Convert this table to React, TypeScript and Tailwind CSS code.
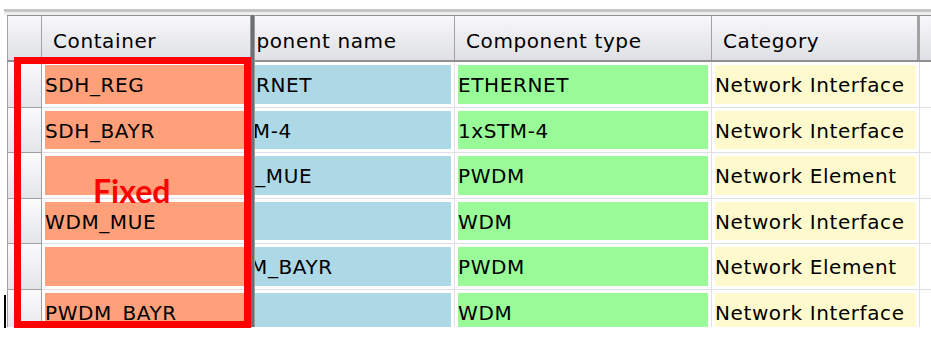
import React from 'react';

type Row = {
  container: string;
  name: string;
  type: string;
  category: string;
};

const rows: Row[] = [
  { container: 'SDH_REG', name: 'ETHERNET', type: 'ETHERNET', category: 'Network Interface' },
  { container: 'SDH_BAYR', name: '1xSTM-4', type: '1xSTM-4', category: 'Network Interface' },
  { container: '', name: 'WDM_MUE', type: 'PWDM', category: 'Network Element' },
  { container: 'WDM_MUE', name: '', type: 'WDM', category: 'Network Interface' },
  { container: '', name: 'PWDM_BAYR', type: 'PWDM', category: 'Network Element' },
  { container: 'PWDM_BAYR', name: '', type: 'WDM', category: 'Network Interface' },
];

const headCell = 'flex items-center pl-[11px] pt-[5px] bg-gradient-to-b from-[#f8f8fa] to-[#dfe0e5] border-r border-[#a3a3a3]';
const bodyCell = 'h-[45.5px] shrink-0 border-b border-r border-[#dde0e6] px-[3px] py-[3px]';
const fill = 'flex h-full items-center pt-[2px] whitespace-nowrap overflow-hidden';

const App: React.FC = () => {
  return (
    <div className="relative h-[340px] w-[931px] overflow-hidden bg-white font-['DejaVu_Sans',sans-serif] text-[20px] tracking-[0.6px] text-black">
      <div className="h-[9px]" />
      <div className="ml-[4px] h-[3px] bg-[#c6c6c6]" />
      <div className="ml-[4px] h-[3px] bg-[#efefef]" />

      <div className="ml-[7px] flex h-[312px] overflow-hidden">
        {/* frozen columns */}
        <div className="flex w-[243px] shrink-0 flex-col">
          <div className="flex h-[47px] shrink-0 border-t border-b-2 border-[#8f8f8f]">
            <div className="w-[35px] shrink-0 border-l border-r border-[#a3a3a3] bg-gradient-to-b from-[#f8f8fa] to-[#dfe0e5]" />
            <div className="flex w-[208px] items-center bg-gradient-to-b from-[#f8f8fa] to-[#dfe0e5] pl-[11px] pt-[5px]">Container</div>
          </div>
          {rows.map((r, i) => (
            <div key={i} className="flex">
              <div className="h-[45.5px] w-[35px] shrink-0 border-b border-l border-r border-[#a0a0a0] bg-gradient-to-b from-[#fbfbfc] to-[#e4e5e9]" />
              <div className="h-[45.5px] w-[208px] shrink-0 border-b border-[#dde0e6] py-[3px] pl-[3px] pr-[1px]">
                <div className={`${fill} bg-[#ffa07a]`}>{r.container}</div>
              </div>
            </div>
          ))}
        </div>

        {/* frozen separator */}
        <div className="w-[5px] shrink-0 border-x border-[#9a9ca0] bg-[#6c6f74]" />

        {/* scrolled columns */}
        <div className="flex-1 overflow-hidden">
          <div className="ml-[-57px] flex flex-col">
            <div className="flex h-[47px] shrink-0 border-t border-b-2 border-[#8f8f8f]">
              <div className={`${headCell} w-[257px] shrink-0`}>Component name</div>
              <div className={`${headCell} w-[257px] shrink-0`}>Component type</div>
              <div className={`${headCell} w-[208px] shrink-0 border-r-[3px] border-[#7f7f7f]`}>Category</div>
              <div className="w-[60px] shrink-0 bg-gradient-to-b from-[#f8f8fa] to-[#dfe0e5]" />
            </div>
            {rows.map((r, i) => (
              <div key={i} className="flex">
                <div className={`${bodyCell} w-[257px]`}>
                  <div className={`${fill} bg-[#add8e6]`}>{r.name}</div>
                </div>
                <div className={`${bodyCell} w-[257px]`}>
                  <div className={`${fill} bg-[#98fb98]`}>{r.type}</div>
                </div>
                <div className={`${bodyCell} w-[208px]`}>
                  <div className={`${fill} bg-[#fffacd]`}>{r.category}</div>
                </div>
                <div className="h-[45.5px] w-[60px] shrink-0 border-b border-[#dde0e6]" />
              </div>
            ))}
          </div>
        </div>
      </div>

      {/* annotation overlay */}
      <div className="absolute left-[14px] top-[57px] h-[271px] w-[237px] border-[7px] border-[#ff0000]" />
      <div className="absolute left-[93px] top-[171px] font-['Lato',sans-serif] text-[32px] font-bold leading-[40px] tracking-normal text-[#ff0000]">
        Fixed
      </div>
      <div className="absolute left-[4px] top-[295px] h-[33px] w-[2px] bg-black" />
    </div>
  );
};

export default App;
